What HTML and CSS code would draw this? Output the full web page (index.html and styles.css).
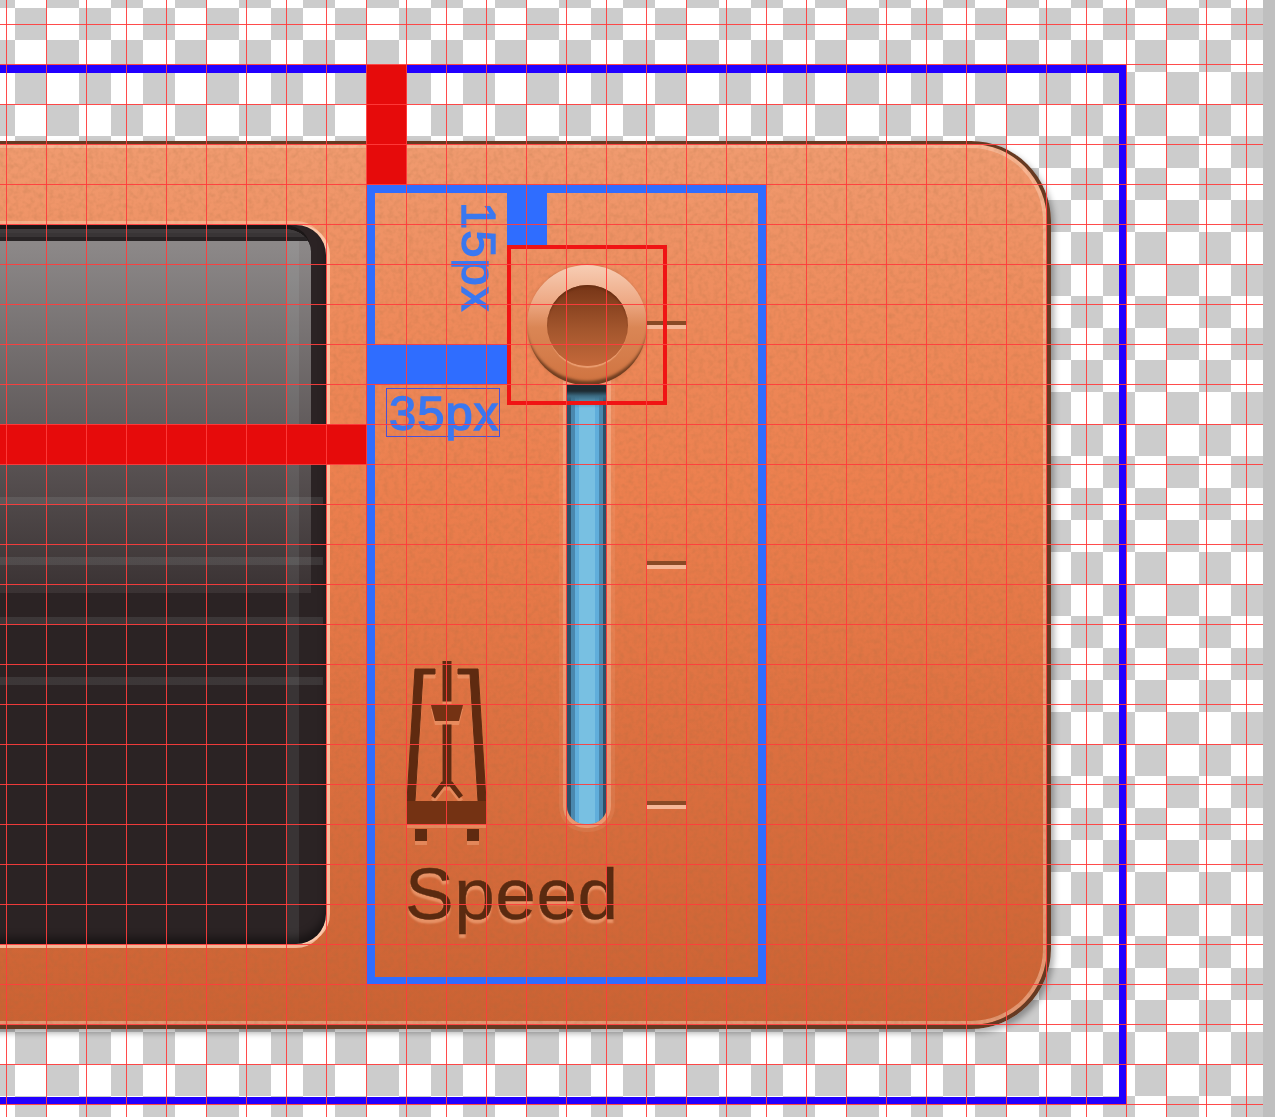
FILE: index.html
```html
<!DOCTYPE html>
<html lang="en">
<head>
<meta charset="utf-8">
<title>Speed control spec</title>
<link rel="stylesheet" href="styles.css">
</head>
<body>
<main class="canvas">
  <div class="frame">
    <section class="panel">
      <svg class="grain" aria-hidden="true">
        <filter id="grain-noise" x="0" y="0" width="100%" height="100%">
          <feTurbulence type="fractalNoise" baseFrequency="0.2" numOctaves="2" seed="4"/>
          <feColorMatrix type="matrix" values="0 0 0 0 0.35  0 0 0 0 0.15  0 0 0 0 0.05  1.4 0 0 0 -0.55"/>
        </filter>
        <rect width="100%" height="100%" filter="url(#grain-noise)"/>
      </svg>
      <div class="screen">
        <div class="glass"></div>
        <div class="scanlines"></div>
        <div class="sheen"></div>
      </div>
      <div class="control">
        <div class="icon-cell">
          <svg class="metronome" viewBox="0 0 79 180" width="79" height="180" aria-hidden="true">
            <polygon class="m-frame" points="8,8 28,8 28,13 16,13 8,140 0,140"/>
            <polygon class="m-frame" points="71,8 51,8 51,13 63,13 71,140 79,140"/>
            <rect class="m-frame" x="36" y="0" width="8" height="40"/>
            <polygon class="m-base" points="24,44 56,44 52,60 28,60"/>
            <rect class="m-frame" x="36" y="64" width="8" height="58"/>
            <path class="m-arch" d="M26 136 L36 123 H44 L54 136"/>
            <rect class="m-base" x="0" y="140" width="79" height="23"/>
            <rect class="m-foot" x="8" y="168" width="12" height="12"/>
            <rect class="m-foot" x="60" y="168" width="12" height="12"/>
          </svg>
        </div>
        <div class="slider">
          <div class="thumb"><div class="hole"></div></div>
          <div class="track"></div>
          <div class="ticks"><i class="tick"></i><i class="tick"></i><i class="tick"></i></div>
          <div class="spec-box"></div>
        </div>
        <div class="label">Speed</div>
        <div class="gap gap-v"></div>
        <div class="gap gap-h"></div>
        <span class="note note-v">15px</span>
        <span class="note note-h">35px</span>
      </div>
    </section>
  </div>
  <div class="bar bar-v"></div>
  <div class="bar bar-h"></div>
  <div class="guides"></div>
</main>
<div class="rail"></div>
</body>
</html>
```
FILE: styles.css
```css
* { box-sizing: border-box; }
html, body { height: 100%; }
body {
  margin: 0;
  display: flex;
  overflow: hidden;
  font-family: "Liberation Sans", Arial, sans-serif;
  background: #fff;
}
.canvas {
  position: relative;
  flex: 1;
  height: 1117px;
  overflow: hidden;
  padding-top: 65px;
  background: repeating-conic-gradient(#ccc 0 25%, #fff 0 50%) -17px 8px / 64px 64px;
}
.rail { width: 12px; height: 1117px; background: #bfbfbf; }
.frame {
  width: 1146px;
  height: 1039px;
  margin-left: -20px;
  padding-top: 68px;
  border: 7px solid #2200ff;
  border-top-width: 8px;
}
.panel {
  position: relative;
  display: flex;
  align-items: center;
  gap: 41px;
  width: 1171px;
  height: 888px;
  margin-left: -107px;
  padding: 41px 0 41px;
  border: 4px solid #663a22;
  border-top-width: 3px;
  border-radius: 80px;
  background: linear-gradient(180deg, #f09b70 0%, #ee8a5b 20%, #ec7f4e 40%, #de7141 65%, #cb6233 100%);
  box-shadow: 3px 4px 6px rgba(0, 0, 0, .32), inset 0 0 0 4px rgba(255, 215, 190, .45);
}
.grain {
  position: absolute;
  inset: 0;
  width: 100%;
  height: 100%;
  border-radius: 76px;
  opacity: .3;
}
.screen {
  position: relative;
  flex: none;
  width: 442px;
  height: 719px;
  overflow: hidden;
  border-radius: 30px;
  background: #2b2324;
  box-shadow: 4px 0 0 rgba(255, 208, 180, .8), 0 4px 0 rgba(255, 208, 180, .75), 0 -4px 0 rgba(255, 208, 180, .45);
}
.glass {
  position: absolute;
  top: 0;
  left: 0;
  right: 15px;
  height: 368px;
  border-top: 4px solid #1b1717;
  border-radius: 0 26px 0 0;
  background:
    linear-gradient(180deg, #3f3b3c 0 4px, #393536 4px 8px, #282425 8px 12px, transparent 12px),
    linear-gradient(180deg, #8c8888 16px, #3a3233 100%);
  background-clip: padding-box;
}
.scanlines {
  position: absolute;
  top: 272px;
  left: 0;
  right: 3px;
  height: 188px;
  background: repeating-linear-gradient(180deg, rgba(235, 255, 255, .09) 0 8px, transparent 8px 60px);
}
.sheen {
  position: absolute;
  top: 16px;
  bottom: 0;
  right: 27px;
  width: 12px;
  background: rgba(235, 255, 255, .08);
}
.screen::after {
  content: "";
  position: absolute;
  inset: 0;
  border-radius: 30px;
  box-shadow: inset -3px -10px 8px -4px rgba(0, 0, 0, .45);
}
.control {
  position: relative;
  flex: none;
  display: grid;
  grid-template-columns: 132px 160px 1fr;
  grid-template-rows: 596px auto;
  width: 399px;
  height: 799px;
  padding-top: 52px;
  border: 8px solid #2f6dff;
  border-bottom-width: 7px;
}
.icon-cell {
  display: flex;
  align-items: flex-end;
  padding-left: 32px;
}
.metronome {
  display: block;
  filter: drop-shadow(0 4px 0 rgba(255, 190, 150, .35));
}
.m-frame { fill: #5f2a10; stroke: #5f2a10; stroke-width: 1; }
.m-base { fill: #743213; }
.m-foot { fill: #5f2a10; }
.m-arch { fill: none; stroke: #5f2a10; stroke-width: 5; }
.slider {
  position: relative;
  display: flex;
  flex-direction: column;
  align-items: center;
  padding-top: 20px;
}
.thumb {
  position: relative;
  z-index: 1;
  display: flex;
  justify-content: center;
  align-items: center;
  flex: none;
  width: 120px;
  height: 120px;
  border-radius: 50%;
  background: linear-gradient(180deg, #f7cdb4 0%, #eeaa86 30%, #da8655 52%, #cf7340 100%);
  box-shadow: inset 0 -6px 3px -2px #6e3d20, 0 0 3px rgba(120, 60, 30, .3);
}
.hole {
  width: 81px;
  height: 81px;
  border-radius: 50%;
  background: linear-gradient(180deg, #763517 0%, #a3562d 55%, #c4683a 100%);
  box-shadow: inset 0 3px 2px -1px #6b3014, 0 3px 1px -1px rgba(255, 185, 145, .55);
}
.track {
  width: 40px;
  height: 440px;
  margin-top: -1px;
  border-radius: 0 0 18px 18px;
  background:
    linear-gradient(180deg, #1e2b32 0 7px, #3b6a82 12px, transparent 24px),
    linear-gradient(90deg, #2d5068 0 4px, #4a88ae 4px 8px, #60aedb 8px 12px, #78c0e2 12px 28px, #60aedb 28px 32px, #4a88ae 32px 36px, #2d5068 36px);
  box-shadow: 0 0 0 4px rgba(255, 205, 175, .38), 0 0 0 8px rgba(255, 205, 175, .1);
}
.ticks {
  position: absolute;
  top: 76px;
  left: 140px;
  display: flex;
  flex-direction: column;
  gap: 232px;
}
.tick {
  display: block;
  width: 39px;
  height: 8px;
  background: linear-gradient(180deg, #8a4a25 0 4px, #f6b797 4px);
}
.spec-box {
  position: absolute;
  z-index: 2;
  top: 0;
  left: 0;
  width: 160px;
  height: 160px;
  border: 4px solid #f01414;
}
.label {
  grid-column: 1 / -1;
  margin: 17px 0 0 30px;
  font-size: 73px;
  line-height: 72px;
  letter-spacing: .5px;
  color: #5a2a10;
  -webkit-text-stroke: .4px #5a2a10;
  text-shadow: 0 4px 2px rgba(255, 190, 150, .5);
}
.gap { position: absolute; background: #2f6dff; }
.gap-v { top: 0; left: 132px; width: 40px; height: 52px; }
.gap-h { top: 151px; left: -8px; width: 140px; height: 40px; }
.note {
  position: absolute;
  font-size: 49px;
  line-height: 1;
  color: #3a78f0;
  -webkit-text-stroke: 1.4px #3a78f0;
  letter-spacing: 1px;
  white-space: nowrap;
}
.note-v { top: 9px; left: 79px; writing-mode: vertical-rl; }
.note-h {
  top: 195px;
  left: 11px;
  width: 114px;
  height: 49px;
  padding-left: 2px;
  border: 1px solid #4a50d8;
}
.bar { position: absolute; background: #e60b0b; }
.bar-v { top: 65px; left: 367px; width: 40px; height: 120px; }
.bar-h { top: 424px; left: 0; width: 367px; height: 40px; }
.guides {
  position: absolute;
  inset: 0;
  z-index: 5;
  background:
    linear-gradient(90deg, rgba(255, 60, 60, .92) 1px, transparent 1px) 6px 0 / 40px 100%,
    linear-gradient(180deg, rgba(255, 60, 60, .92) 1px, transparent 1px) 0 24px / 100% 40px;
}
```
